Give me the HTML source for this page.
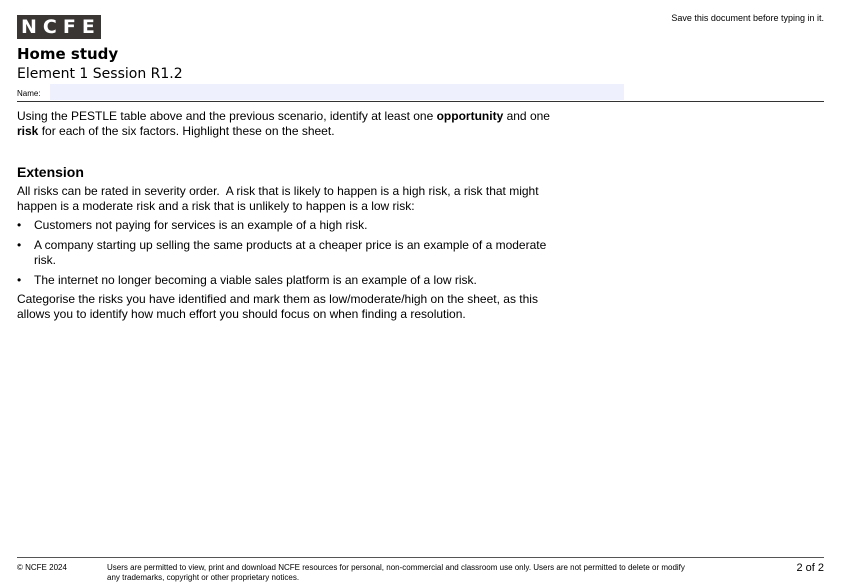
<!DOCTYPE html><html><head><style>
body{margin:0;width:841px;height:588px;background:#fff;position:relative;font-family:"Liberation Sans",Arial,sans-serif;color:#000;overflow:hidden}
.a{position:absolute}
.logo{left:17px;top:15px;width:84px;height:24px;background:#393634;color:#fff;font:bold 19px "DejaVu Sans",sans-serif;letter-spacing:6px;line-height:24px;text-indent:4px;white-space:nowrap;overflow:hidden}
.b{font-size:12px;line-height:15px}
</style></head><body>
<div class="a logo">NCFE</div>
<div class="a" style="right:17px;top:13px;font-size:9px">Save this document before typing in it.</div>
<div class="a" style="left:17px;top:45px;font:bold 15px 'DejaVu Sans',sans-serif">Home study</div>
<div class="a" style="left:17px;top:66px;font:14px 'DejaVu Sans',sans-serif">Element 1 Session R1.2</div>
<div class="a" style="left:17px;top:89px;font-size:8px">Name:</div>
<div class="a" style="left:50px;top:84px;width:574px;height:16px;background:#eef1fd"></div>
<div class="a" style="left:17px;top:101px;width:807px;height:1px;background:#333"></div>
<div class="a b" style="left:17px;top:109px;width:540px">Using the PESTLE table above and the previous scenario, identify at least one <b>opportunity</b> and one <b>risk</b> for each of the six factors. Highlight these on the sheet.</div>
<div class="a" style="left:17px;top:164px;font-weight:bold;font-size:14px">Extension</div>
<div class="a b" style="left:17px;top:184px;width:540px">All risks can be rated in severity order.&nbsp; A risk that is likely to happen is a high risk, a risk that might happen is a moderate risk and a risk that is unlikely to happen is a low risk:</div>
<div class="a b" style="left:17px;top:218px;width:540px">
<div style="position:relative;padding-left:17px;margin-bottom:5px"><span style="position:absolute;left:0">•</span>Customers not paying for services is an example of a high risk.</div>
<div style="position:relative;padding-left:17px;margin-bottom:5px"><span style="position:absolute;left:0">•</span>A company starting up selling the same products at a cheaper price is an example of a moderate risk.</div>
<div style="position:relative;padding-left:17px;margin-bottom:5px"><span style="position:absolute;left:0">•</span>The internet no longer becoming a viable sales platform is an example of a low risk.</div>
</div>
<div class="a b" style="left:17px;top:292px;width:540px">Categorise the risks you have identified and mark them as low/moderate/high on the sheet, as this allows you to identify how much effort you should focus on when finding a resolution.</div>
<div class="a" style="left:17px;top:557px;width:807px;height:1px;background:#555"></div>
<div class="a" style="left:17px;top:563px;font-size:8px">© NCFE 2024</div>
<div class="a" style="left:107px;top:563px;width:650px;font-size:8px;line-height:10px">Users are permitted to view, print and download NCFE resources for personal, non-commercial and classroom use only. Users are not permitted to delete or modify<br>any trademarks, copyright or other proprietary notices.</div>
<div class="a" style="right:17px;top:562px;font-size:11px">2 of 2</div>
</body></html>
